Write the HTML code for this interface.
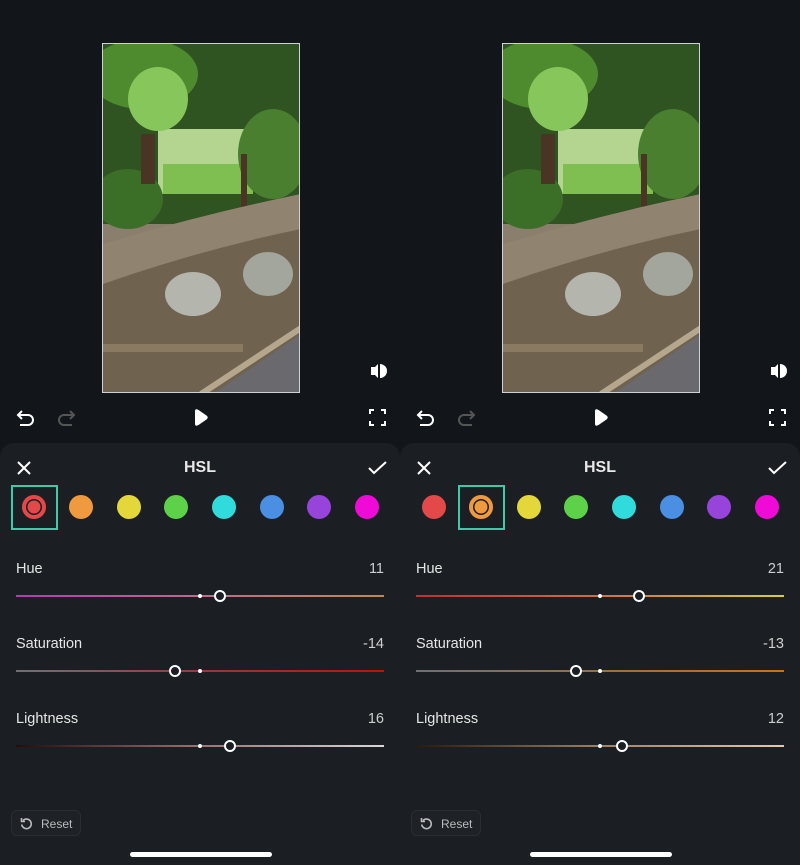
<!DOCTYPE html>
<html><head><meta charset="utf-8"><style>
*{margin:0;padding:0;box-sizing:border-box}
body{width:800px;height:865px;background:#121519;overflow:hidden;font-family:"Liberation Sans",sans-serif;position:relative}
.half{position:absolute;top:0;width:400px;height:865px}
.img{position:absolute;left:102px;top:43px;width:198px;height:350px;border:1px solid #cfd2d4;overflow:hidden}
.panel{position:absolute;left:0;top:443px;width:400px;height:422px;background:#1b1e22;border-radius:14px 14px 0 0}
.abs{position:absolute}
.title{left:0;width:400px;top:459px;text-align:center;color:#e8e8e8;font-size:16px;font-weight:bold}
.sw{position:absolute;top:495px;width:24px;height:24px;border-radius:50%}
.lab{position:absolute;left:16px;color:#e6e6e6;font-size:14.5px}
.val{position:absolute;right:16px;color:#cfcfcf;font-size:14.5px}
.track{position:absolute;left:16px;width:368px;height:2px}
.dot{position:absolute;left:198px;width:4px;height:4px;border-radius:50%;background:#fff}
.knob{position:absolute;width:12px;height:12px;border-radius:50%;border:2px solid #fff;background:#1b1e22}
.reset{left:11px;top:810px;width:70px;height:26px;border:1px solid #2a2d31;border-radius:6px;background:#1e2125;color:#bbb;font-size:12px}
.home{left:130px;top:852px;width:142px;height:5px;border-radius:3px;background:#fff}
.sel{position:absolute;top:485px;width:47px;height:45px;border:2px solid #3ccaa9}
</style></head><body>

<div class="half" style="left:0">
 <div class="img"><svg width="198" height="350" viewBox="0 0 198 350">
  <rect width="198" height="350" fill="#8a7e6c"/>
  <rect width="198" height="180" fill="#2f5321"/>
  <rect x="55" y="85" width="95" height="65" fill="#b3d590"/>
  <rect x="60" y="120" width="90" height="30" fill="#7fbf52"/>
  <ellipse cx="40" cy="30" rx="55" ry="35" fill="#4e8a2e"/>
  <ellipse cx="55" cy="55" rx="30" ry="32" fill="#86c65a"/>
  <ellipse cx="170" cy="110" rx="35" ry="45" fill="#4a7f2f"/>
  <ellipse cx="25" cy="155" rx="35" ry="30" fill="#3b6f28"/>
  <rect x="38" y="90" width="14" height="50" fill="#4a3424"/>
  <rect x="138" y="110" width="6" height="55" fill="#4a3424"/>
  <path d="M0 200 Q100 170 198 150 V350 H0Z" fill="#908470"/>
  <path d="M0 240 Q100 205 198 185 V350 H0Z" fill="#6f634f"/>
  <ellipse cx="90" cy="250" rx="28" ry="22" fill="#b4b5ac"/>
  <ellipse cx="165" cy="230" rx="25" ry="22" fill="#a3a69c"/>
  <rect x="0" y="300" width="140" height="8" fill="#8a7a62"/>
  <path d="M110 350 L198 290 V350Z" fill="#6a6a6e"/>
  <path d="M98 350 L198 284" stroke="#b5a68e" stroke-width="6"/>
 </svg></div>
 <div class="abs" style="left:369px;top:362px;width:20px;height:18px"><svg width="20" height="18"><path d="M2 5h4l3-3v14l-3-3H2z" fill="#fff"/><path d="M11 2a7 7 0 0 1 0 14z" fill="#fff"/></svg></div>
 <svg class="abs" style="left:16px;top:408px" width="20" height="18"><path d="M6 3L2 7l4 4M2 7h10a5 5 0 0 1 0 10H4" stroke="#fff" stroke-width="2" fill="none"/></svg>
 <svg class="abs" style="left:56px;top:408px" width="20" height="18"><path d="M14 3l4 4-4 4M18 7H8a5 5 0 0 0 0 10h8" stroke="#555" stroke-width="2" fill="none"/></svg>
 <svg class="abs" style="left:193px;top:408px" width="16" height="19"><path d="M2 3.5Q2 0 5.5 2l8 5.5q2.5 2 0 4L5.5 17Q2 19 2 15.5z" fill="#fff"/></svg>
 <svg class="abs" style="left:369px;top:409px" width="17" height="17"><path d="M1 5V1h4M12 1h4v4M16 12v4h-4M5 16H1v-4" stroke="#fff" stroke-width="2" fill="none"/></svg>
 <div class="panel"></div>
 <svg class="abs" style="left:16px;top:460px" width="16" height="16"><path d="M2 2l12 12M14 2L2 14" stroke="#fff" stroke-width="2"/></svg>
 <div class="abs title">HSL</div>
 <svg class="abs" style="left:368px;top:461px" width="19" height="14"><path d="M1 7l5 5L18 1" stroke="#fff" stroke-width="2" fill="none"/></svg>
 <div class="sel" style="left:11px"></div>
 <div class="sw" style="left:22px;background:#e34949;box-shadow:inset 0 0 0 4px #e34949,inset 0 0 0 5.5px #1b1e22"></div>
 <div class="sw" style="left:69px;background:#ef9a3e"></div>
 <div class="sw" style="left:117px;background:#e4d73a"></div>
 <div class="sw" style="left:164px;background:#5ed14a"></div>
 <div class="sw" style="left:212px;background:#2fdbdb"></div>
 <div class="sw" style="left:260px;background:#4a8fe2"></div>
 <div class="sw" style="left:307px;background:#9744db"></div>
 <div class="sw" style="left:355px;background:#f00ad8"></div>
 <div class="lab" style="top:561px">Hue</div><div class="val" style="top:561px">11</div>
 <div class="track" style="top:595px;background:linear-gradient(90deg,#b03cb8,#c06a8a 50%,#c08a50)"></div>
 <div class="dot" style="top:594px"></div><div class="knob" style="left:214px;top:590px"></div>
 <div class="lab" style="top:636px">Saturation</div><div class="val" style="top:636px">-14</div>
 <div class="track" style="top:670px;background:linear-gradient(90deg,#707070,#a03030 60%,#c01010)"></div>
 <div class="dot" style="top:669px"></div><div class="knob" style="left:169px;top:665px"></div>
 <div class="lab" style="top:711px">Lightness</div><div class="val" style="top:711px">16</div>
 <div class="track" style="top:745px;background:linear-gradient(90deg,#2a0a0a,#a07070 50%,#d8d8d8)"></div>
 <div class="dot" style="top:744px"></div><div class="knob" style="left:224px;top:740px"></div>
 <div class="abs reset"><svg class="abs" style="left:8px;top:6px" width="13" height="13"><path d="M3 3.5A4.8 4.8 0 1 1 1.7 7.5M1.5 1v3.5H5" stroke="#bbb" stroke-width="1.6" fill="none"/></svg><span class="abs" style="left:29px;top:6px">Reset</span></div>
 <div class="abs home"></div>
</div>

<div class="half" style="left:400px">
 <div class="img"><svg width="198" height="350" viewBox="0 0 198 350">
  <rect width="198" height="350" fill="#8a7e6c"/>
  <rect width="198" height="180" fill="#2f5321"/>
  <rect x="55" y="85" width="95" height="65" fill="#b3d590"/>
  <rect x="60" y="120" width="90" height="30" fill="#7fbf52"/>
  <ellipse cx="40" cy="30" rx="55" ry="35" fill="#4e8a2e"/>
  <ellipse cx="55" cy="55" rx="30" ry="32" fill="#86c65a"/>
  <ellipse cx="170" cy="110" rx="35" ry="45" fill="#4a7f2f"/>
  <ellipse cx="25" cy="155" rx="35" ry="30" fill="#3b6f28"/>
  <rect x="38" y="90" width="14" height="50" fill="#4a3424"/>
  <rect x="138" y="110" width="6" height="55" fill="#4a3424"/>
  <path d="M0 200 Q100 170 198 150 V350 H0Z" fill="#908470"/>
  <path d="M0 240 Q100 205 198 185 V350 H0Z" fill="#6f634f"/>
  <ellipse cx="90" cy="250" rx="28" ry="22" fill="#b4b5ac"/>
  <ellipse cx="165" cy="230" rx="25" ry="22" fill="#a3a69c"/>
  <rect x="0" y="300" width="140" height="8" fill="#8a7a62"/>
  <path d="M110 350 L198 290 V350Z" fill="#6a6a6e"/>
  <path d="M98 350 L198 284" stroke="#b5a68e" stroke-width="6"/>
 </svg></div>
 <div class="abs" style="left:369px;top:362px;width:20px;height:18px"><svg width="20" height="18"><path d="M2 5h4l3-3v14l-3-3H2z" fill="#fff"/><path d="M11 2a7 7 0 0 1 0 14z" fill="#fff"/></svg></div>
 <svg class="abs" style="left:16px;top:408px" width="20" height="18"><path d="M6 3L2 7l4 4M2 7h10a5 5 0 0 1 0 10H4" stroke="#fff" stroke-width="2" fill="none"/></svg>
 <svg class="abs" style="left:56px;top:408px" width="20" height="18"><path d="M14 3l4 4-4 4M18 7H8a5 5 0 0 0 0 10h8" stroke="#555" stroke-width="2" fill="none"/></svg>
 <svg class="abs" style="left:193px;top:408px" width="16" height="19"><path d="M2 3.5Q2 0 5.5 2l8 5.5q2.5 2 0 4L5.5 17Q2 19 2 15.5z" fill="#fff"/></svg>
 <svg class="abs" style="left:369px;top:409px" width="17" height="17"><path d="M1 5V1h4M12 1h4v4M16 12v4h-4M5 16H1v-4" stroke="#fff" stroke-width="2" fill="none"/></svg>
 <div class="panel"></div>
 <svg class="abs" style="left:16px;top:460px" width="16" height="16"><path d="M2 2l12 12M14 2L2 14" stroke="#fff" stroke-width="2"/></svg>
 <div class="abs title">HSL</div>
 <svg class="abs" style="left:368px;top:461px" width="19" height="14"><path d="M1 7l5 5L18 1" stroke="#fff" stroke-width="2" fill="none"/></svg>
 <div class="sel" style="left:58px"></div>
 <div class="sw" style="left:22px;background:#e34949"></div>
 <div class="sw" style="left:69px;background:#ef9a3e;box-shadow:inset 0 0 0 4px #ef9a3e,inset 0 0 0 5.5px #1b1e22"></div>
 <div class="sw" style="left:117px;background:#e4d73a"></div>
 <div class="sw" style="left:164px;background:#5ed14a"></div>
 <div class="sw" style="left:212px;background:#2fdbdb"></div>
 <div class="sw" style="left:260px;background:#4a8fe2"></div>
 <div class="sw" style="left:307px;background:#9744db"></div>
 <div class="sw" style="left:355px;background:#f00ad8"></div>
 <div class="lab" style="top:561px">Hue</div><div class="val" style="top:561px">21</div>
 <div class="track" style="top:595px;background:linear-gradient(90deg,#c03030,#d07040 50%,#d8d030)"></div>
 <div class="dot" style="top:594px"></div><div class="knob" style="left:233px;top:590px"></div>
 <div class="lab" style="top:636px">Saturation</div><div class="val" style="top:636px">-13</div>
 <div class="track" style="top:670px;background:linear-gradient(90deg,#707070,#a07040 60%,#d07010)"></div>
 <div class="dot" style="top:669px"></div><div class="knob" style="left:170px;top:665px"></div>
 <div class="lab" style="top:711px">Lightness</div><div class="val" style="top:711px">12</div>
 <div class="track" style="top:745px;background:linear-gradient(90deg,#2a1a08,#a08060 50%,#e8c8a8)"></div>
 <div class="dot" style="top:744px"></div><div class="knob" style="left:216px;top:740px"></div>
 <div class="abs reset"><svg class="abs" style="left:8px;top:6px" width="13" height="13"><path d="M3 3.5A4.8 4.8 0 1 1 1.7 7.5M1.5 1v3.5H5" stroke="#bbb" stroke-width="1.6" fill="none"/></svg><span class="abs" style="left:29px;top:6px">Reset</span></div>
 <div class="abs home"></div>
</div>
</body></html>
